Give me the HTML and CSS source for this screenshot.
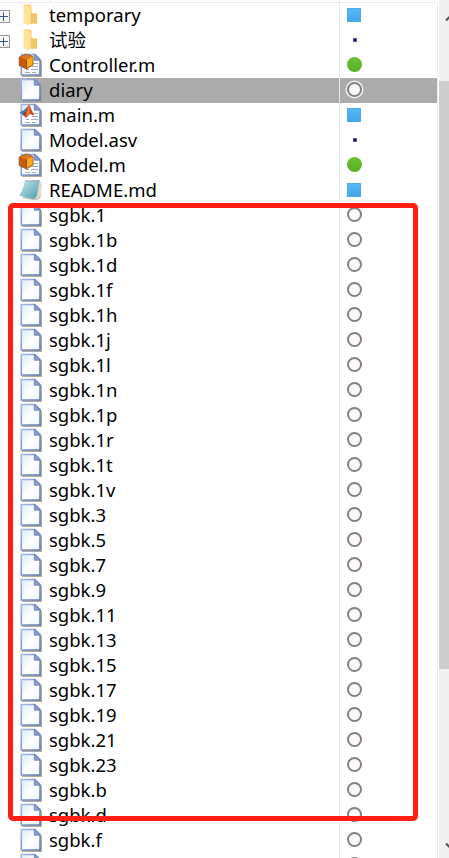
FILE: index.html
```html
<!DOCTYPE html>
<html lang="zh-CN">
<head>
<meta charset="utf-8">
<title>Files</title>
<link rel="stylesheet" href="styles.css">
</head>
<body>
<svg class="defs" aria-hidden="true">
  <defs>
    <linearGradient id="paper" x1="0" y1="0" x2="1" y2="1"><stop offset="0" stop-color="#dcecfd"/><stop offset=".55" stop-color="#fff"/><stop offset="1" stop-color="#e8f4ff"/></linearGradient>
    <linearGradient id="edge" x1="0" y1="0" x2="1" y2="1"><stop offset="0" stop-color="#a3b8e6"/><stop offset="1" stop-color="#6379b4"/></linearGradient>
    <linearGradient id="pad" x1="0" y1="0" x2="1" y2="1"><stop offset="0" stop-color="#c4e8ec"/><stop offset="1" stop-color="#4c9caf"/></linearGradient>
    <linearGradient id="flame" x1="0" y1="0" x2="1" y2="0"><stop offset="0" stop-color="#8e2c20"/><stop offset=".5" stop-color="#e8622a"/><stop offset="1" stop-color="#a32a16"/></linearGradient>
  </defs>
  <symbol id="doc" viewBox="0 0 26 25">
    <path d="M4 3H19L24 8V24H4Z" fill="#a29f8c" opacity=".85"/>
    <path d="M3.3 1.5H17L22 6.5V22H3.3Z" fill="url(#paper)" stroke="url(#edge)" stroke-width="1.6"/>
    <path d="M16.3 1.3V7.2H22.3Z" fill="#8b9ed2" stroke="#6678b2" stroke-width=".8"/>
  </symbol>
  <symbol id="lines" viewBox="0 0 26 25">
    <path d="M14 10.5H20M14 13.5H20M8 16.5H11M13 16.5H20M7 19.5H12M14 19.5H18" stroke="#a4a9b5" stroke-width="1.2"/>
  </symbol>
  <symbol id="class" viewBox="0 0 26 25">
    <use href="#doc"/><use href="#lines"/>
    <path d="M1.2 4.2L8 1L15 3.5V12L8.4 16L1.2 12.5Z" fill="#c75a0c" stroke="#84501e" stroke-width=".8"/>
    <path d="M1.7 4.3L8 1.6L14.6 3.6L8.4 6.6Z" fill="#dc7a22"/>
    <path d="M8.4 6.6L14.6 3.8V11.6L8.4 15.2Z" fill="#ffa91a"/>
    <path d="M8.4 6.6V15" stroke="#8d4a0e"/>
  </symbol>
  <symbol id="matlab" viewBox="0 0 26 25">
    <use href="#doc"/><use href="#lines"/>
    <path d="M1.5 9.5L6 7L10 3L9.5 10L6 13Z" fill="#3d7fb5"/>
    <path d="M5 11L8 7.5L11 1C13 5 14 9 16.5 12.5L12 11L8 15Z" fill="url(#flame)"/>
    <path d="M11 2L11.5 10L8 14L9.5 8Z" fill="#e9843a"/>
  </symbol>
  <symbol id="note" viewBox="0 0 26 25">
    <path d="M4 20L18 22.5L22.5 20L23.5 7L21 5Z" fill="#c4c2bd"/>
    <path d="M20 4L23.5 4L22.5 18L17.5 21.8Z" fill="#e3d9c9"/>
    <path d="M6.5 3.5L21.5 3L19 17.5Q17.5 20.5 15.5 21L1 17.5Q5 13 6.5 3.5Z" fill="url(#pad)"/>
    <path d="M7.5 3L22 2.7" stroke="#607f88" stroke-width="1.5" stroke-dasharray="1 1"/>
  </symbol>
  <symbol id="folder" viewBox="0 0 26 25">
    <path d="M6 1.5H11.5L13.5 3V10L19 11V20.5H6Z" fill="#f1cc68"/>
    <path d="M13 10.5H19V20.5H10L13 18Z" fill="#efc65f"/>
    <path d="M5.5 1.5L12.5 4V20.5L10.5 22.5L5.5 19.5Z" fill="#ffe39b"/>
  </symbol>
  <symbol id="plus" viewBox="0 0 13 13">
    <rect x=".5" y=".5" width="12" height="12" fill="#f5f5f5" stroke="#969696"/>
    <path d="M2.5 6.5H11M6.5 2.5V11" stroke="#3b5189" stroke-width="1"/>
  </symbol>
  <symbol id="up" viewBox="0 0 10 7"><path d="M1 5.5L5 1.5L9 5.5" fill="none" stroke="#555" stroke-width="2.2"/></symbol>
  <symbol id="down" viewBox="0 0 10 7"><path d="M1 1.5L5 5.5L9 1.5" fill="none" stroke="#555" stroke-width="2.2"/></symbol>
</svg>
<div class="window">
  <div class="table">
    <div class="header"><span></span><span></span></div>
    <div class="rows" id="rows"></div>
  </div>
  <div class="scrollbar">
    <svg class="arrow"><use href="#up"/></svg>
    <div class="thumb"></div>
    <svg class="arrow"><use href="#down"/></svg>
  </div>
  <div class="highlight"></div>
</div>
<script src="rows.js"></script>
</body>
</html>
```
FILE: styles.css
```css
* { box-sizing: border-box; }
body { margin: 0; overflow: hidden; background: #fff; }
.defs { position: absolute; width: 0; height: 0; }
.window {
  position: relative;
  display: flex;
  width: 449px;
  height: 858px;
  overflow: hidden;
  color: #000;
  font: 18.5px/25px "Noto Sans", "Noto Sans CJK SC", sans-serif;
}
.table { width: 438px; flex: none; }
.header { display: grid; grid-template-columns: 51px 289px 1fr; height: 3px; border-bottom: 1px solid #e9e9e9; }
.header span { border-right: 1px solid #e4e4e4; }
.row { display: grid; grid-template-columns: 340px 98px; height: 25px; }
.name, .status { display: flex; align-items: center; border-right: 1px solid #ebebeb; height: 25px; }
.selected { background: #ababab; }
.expander { width: 18px; height: 25px; flex: none; display: flex; align-items: center; overflow: hidden; }
.expander svg { width: 13px; height: 13px; margin-left: -3px; margin-top: 2px; flex: none; }
.icon { width: 26px; height: 25px; flex: none; }
.label { margin: -2px 0 0 5px; white-space: nowrap; line-height: 25px; }
.mark { flex: none; display: block; }
.square { width: 14px; height: 14px; margin: -2px 0 0 7px; background: linear-gradient(#55b8fb, #43a5ea); border: 1px solid #50a9e8; }
.dot { width: 4px; height: 4px; margin: -1px 0 0 13px; background: #00007f; border: 1px solid #5c5ca7; }
.green { width: 15px; height: 15px; margin: -2px 0 0 7px; border-radius: 50%; background: linear-gradient(#6ec334, #57ad23); }
.ring { width: 15px; height: 15px; margin: -2px 0 0 7px; border-radius: 50%; background: #fdf9fb; border: 2px solid #828282; }
.selected .ring { box-shadow: 0 0 0 1.5px #f2f2f2; }
.scrollbar { width: 10px; margin-left: 1px; background: #f0f0f0; display: flex; flex-direction: column; }
.arrow { width: 10px; height: 7px; margin: 15px 0 0 6px; flex: none; }
.thumb { height: 588px; margin: 59px 0 157px; background: #cdcdcd; flex: none; }
.thumb + .arrow { margin-top: 16px; }
.highlight { position: absolute; left: 8px; top: 203px; width: 410px; height: 618px; border: 5px solid #ff1f10; border-radius: 5px; }
```
FILE: rows.js
```javascript
const files = [
  ["temporary", "folder", "square"], ["试验", "folder", "dot"],
  ["Controller.m", "class", "green"], ["diary", "doc", "ring"],
  ["main.m", "matlab", "square"], ["Model.asv", "doc", "dot"],
  ["Model.m", "class", "green"], ["README.md", "note", "square"],
  ..."1 1b 1d 1f 1h 1j 1l 1n 1p 1r 1t 1v 3 5 7 9 11 13 15 17 19 21 23 b d f".split(" ").map(s => ["sgbk." + s, "doc", "ring"]),
  ["", "doc", "ring"]
];
document.getElementById("rows").innerHTML = files.map(([name, icon, mark]) => `
  <div class="row${name === "diary" ? " selected" : ""}">
    <div class="name">
      <span class="expander">${icon === "folder" ? '<svg><use href="#plus"/></svg>' : ""}</span>
      <svg class="icon"><use href="#${icon}"/></svg><span class="label">${name}</span>
    </div>
    <div class="status"><span class="mark ${mark}"></span></div>
  </div>`).join("");
```
